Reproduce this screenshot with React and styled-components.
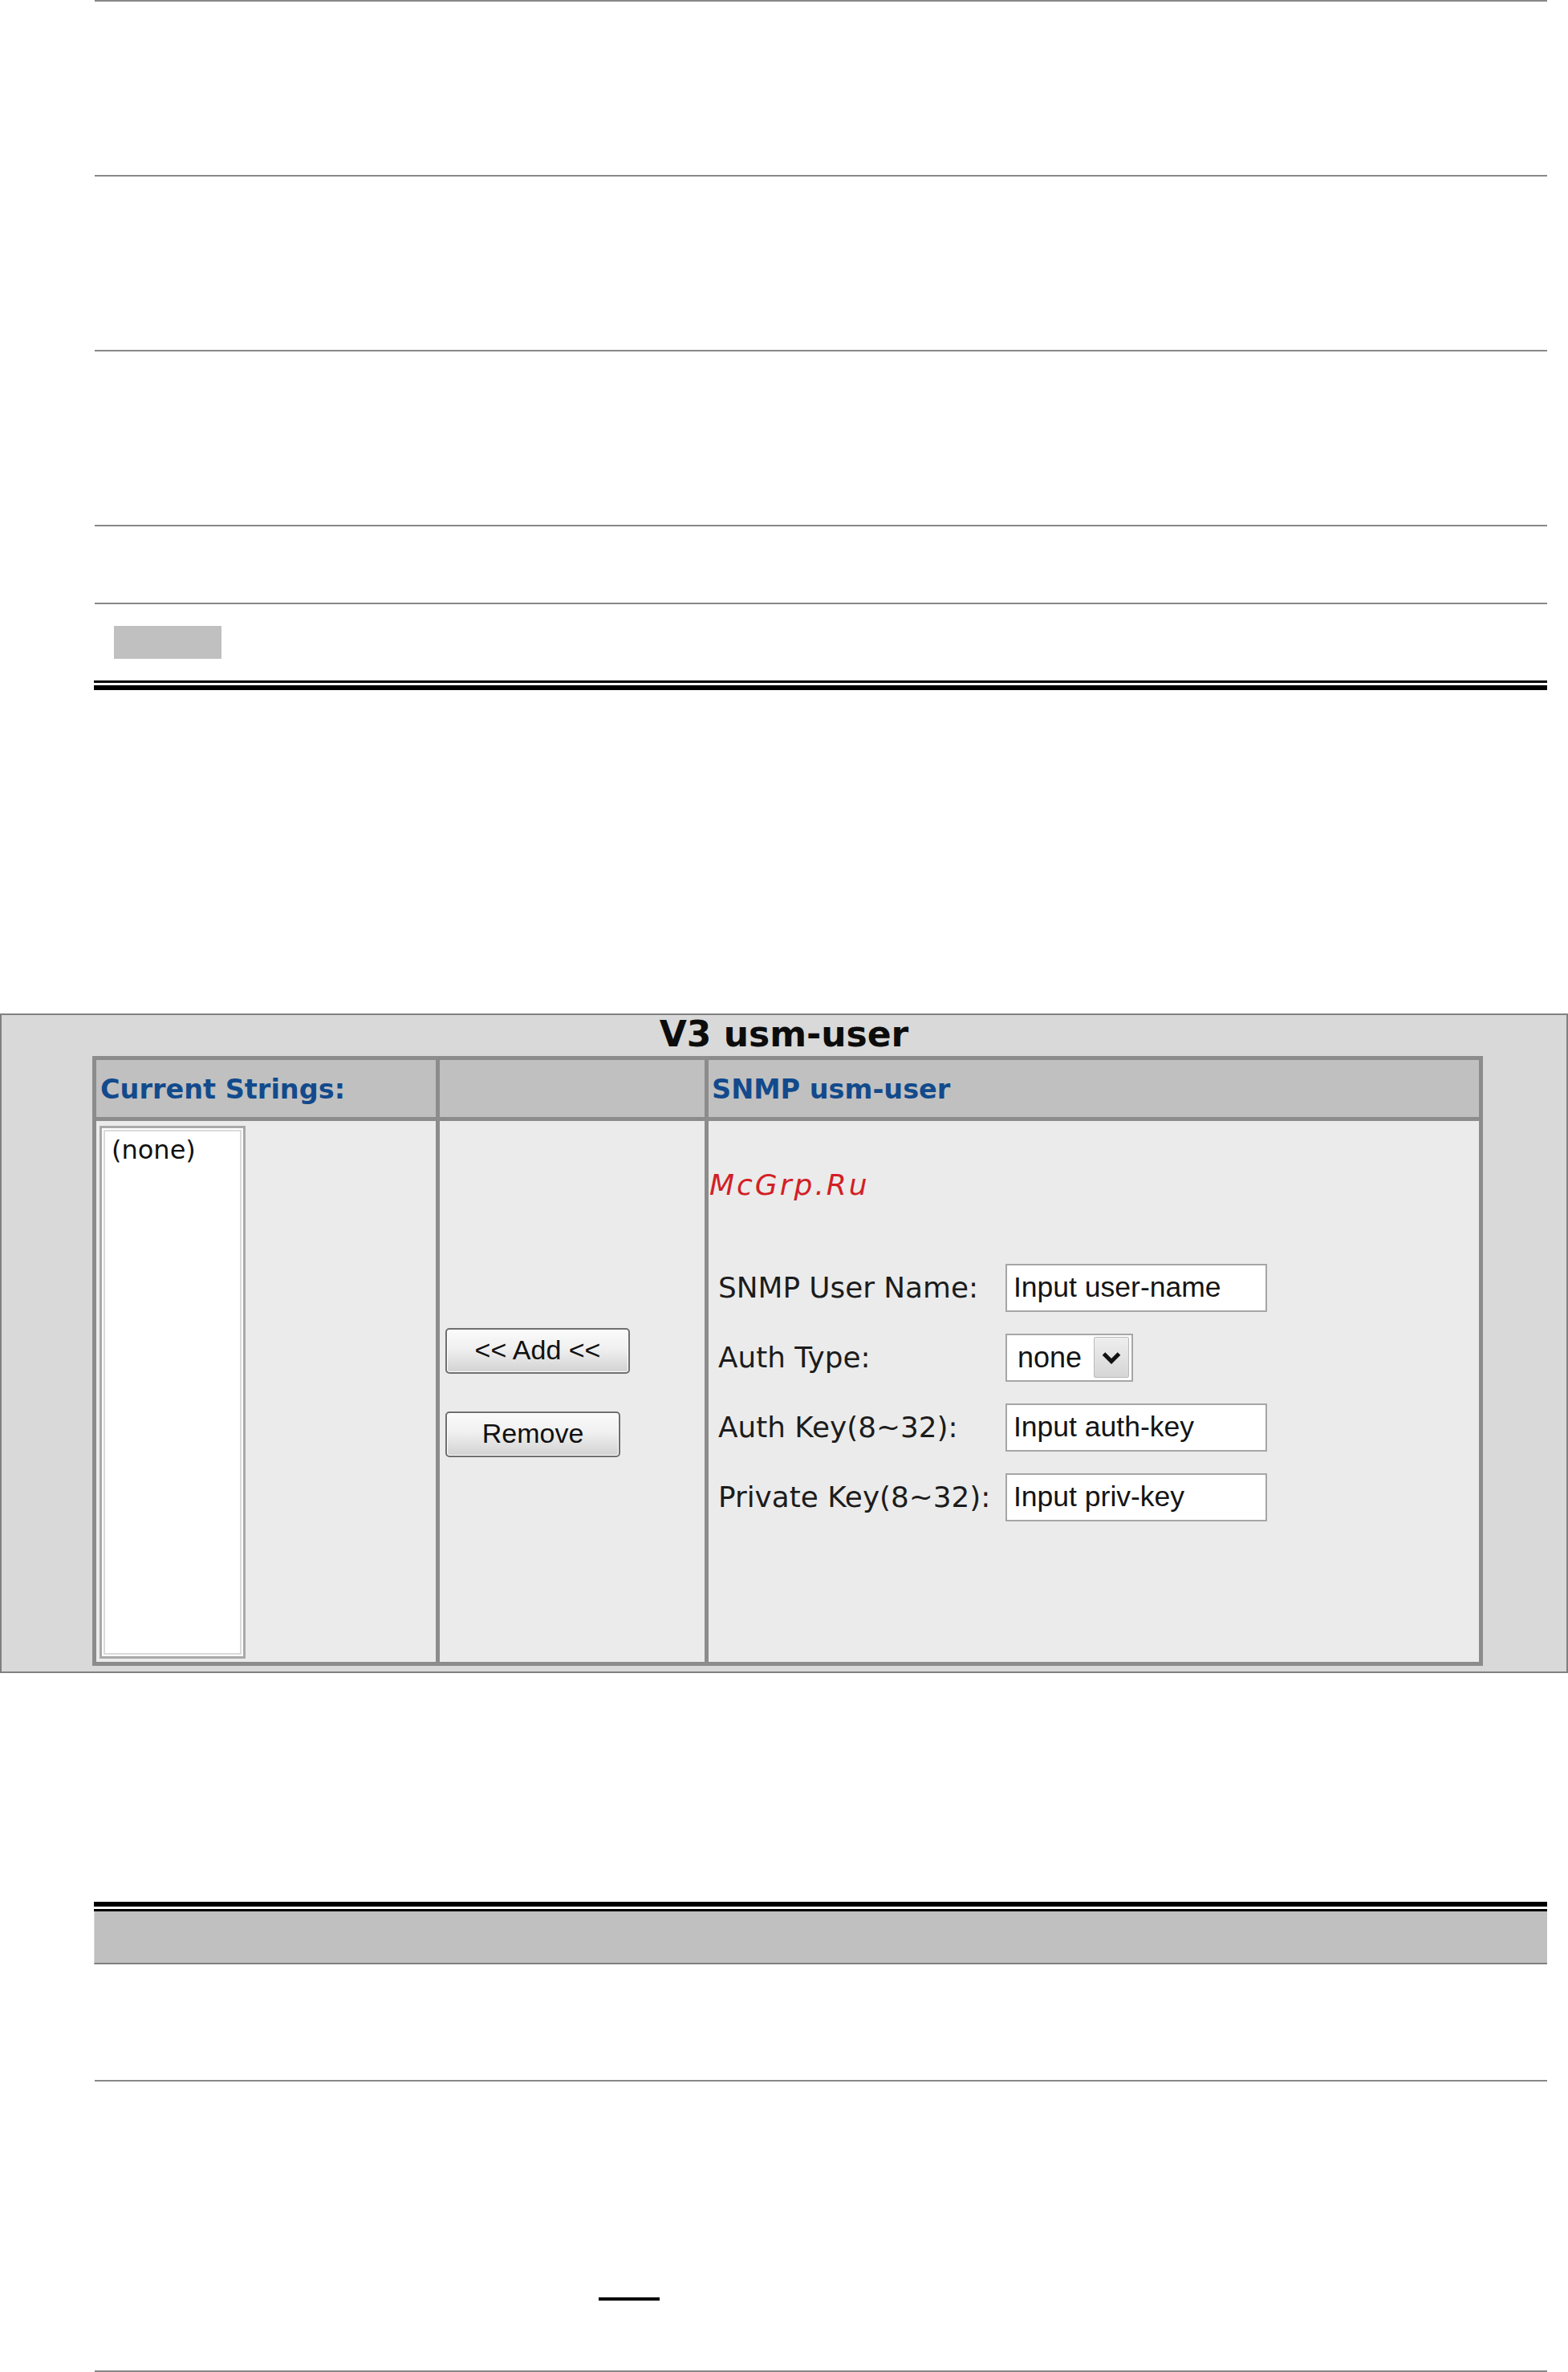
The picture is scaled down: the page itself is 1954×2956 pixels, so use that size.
import React from "react";
import styled, { createGlobalStyle } from "styled-components";

const Global = createGlobalStyle`
  html, body { margin: 0; padding: 0; background: #ffffff; }
  body { width: 1954px; min-height: 2956px; font-family: "DejaVu Sans", Verdana, sans-serif; }
  * { box-sizing: border-box; }
`;

const Page = styled.div`
  width: 1954px;
  height: 2956px;
  overflow: hidden;
  background: #ffffff;
`;

const DocSection = styled.section`
  margin-left: 118px;
  width: 1810px;
  margin-top: ${(p) => p.$top || 0}px;
`;

const DocRow = styled.div`
  height: ${(p) => p.$h}px;
  border-top: ${(p) => (p.$noTop ? "none" : "2px solid #888888")};
  border-bottom: ${(p) => (p.$bottom ? "2px solid #888888" : "none")};
  box-sizing: content-box;
`;

const Swatch = styled.div`
  margin: 27px 0 0 24px;
  width: 134px;
  height: 41px;
  background: #c0c0c0;
`;

const DoubleRule = styled.div`
  height: 12px;
  border-top: ${(p) => (p.$thickTop ? 6 : 3)}px solid #000;
  border-bottom: ${(p) => (p.$thickTop ? 3 : 6)}px solid #000;
  margin-left: -1px;
`;

const HeaderBand = styled.div`
  height: 66px;
  background: #c0c0c0;
  border-bottom: 2px solid #808080;
  border-left: 1px solid #d8d8d8;
  margin-left: -1px;
`;

const BlankUnderline = styled.span`
  display: block;
  margin: 269px 0 0 628px;
  width: 76px;
  height: 4px;
  background: #000;
`;

const Panel = styled.div`
  margin-top: ${(p) => p.$top}px;
  width: 1954px;
  height: 822px;
  background: #d9d9d9;
  border: 2px solid #808080;
  padding-top: 2px;
`;

const PanelTitle = styled.h2`
  margin: 0;
  height: 44px;
  font-family: "DejaVu Sans", Verdana, sans-serif;
  font-weight: bold;
  font-size: 44px;
  line-height: 44px;
  color: #0c0c0c;
  text-align: center;
`;

const Grid = styled.div`
  margin: 5px 0 0 113px;
  width: 1733px;
  display: grid;
  grid-template-columns: 423px 330px 960px;
  grid-template-rows: 71px 674px;
  gap: 5px;
  padding: 5px;
  background: #8c8c8c;
`;

const HeadCell = styled.div`
  background: #c0c0c0;
  display: flex;
  align-items: center;
  padding-left: ${(p) => p.$pad || 5}px;
  padding-top: 2px;
  font-family: "DejaVu Sans", Verdana, sans-serif;
  font-weight: bold;
  font-size: 33.5px;
  color: #124a8c;
  white-space: nowrap;
`;

const ListCell = styled.div`
  background: #ebebeb;
  padding: 6px 0 0 4px;
`;

const ListBox = styled.div`
  width: 182px;
  height: 664px;
  background: #ffffff;
  border: 3px solid #a9a9a9;
  box-shadow: inset 0 0 0 2px #ffffff, inset 0 0 0 4px #dadada;
  padding: 8px 0 0 12px;
`;

const ListItem = styled.div`
  font-family: "DejaVu Sans", Verdana, sans-serif;
  font-size: 32px;
  line-height: 1.2;
  color: #111;
`;

const ActionCell = styled.div`
  background: #ebebeb;
  display: flex;
  flex-direction: column;
  align-items: flex-start;
  justify-content: center;
  gap: 47px;
  padding: 2px 0 0 7px;
`;

const PushButton = styled.button`
  width: ${(p) => p.$w}px;
  height: 57px;
  margin: 0;
  padding: 0 0 2px 0;
  border: 2px solid #6f6f6f;
  border-radius: 5px;
  background: linear-gradient(#fbfbfb 0%, #f0f0f0 45%, #d2d2d2 100%);
  box-shadow: inset 0 0 0 1px #ffffff;
  font-family: "Liberation Sans", Arial, sans-serif;
  font-size: 34px;
  color: #111;
  text-align: center;
  cursor: pointer;
`;

const FormCell = styled.div`
  position: relative;
  background: #ebebeb;
  display: flex;
  flex-direction: column;
  justify-content: center;
  padding: 2px 0 0 12px;
`;

const Watermark = styled.span`
  position: absolute;
  left: 1px;
  top: 62px;
  font-family: "DejaVu Sans", Verdana, sans-serif;
  font-style: italic;
  font-size: 36px;
  line-height: 1;
  letter-spacing: 3px;
  color: #d21f26;
`;

const FormGrid = styled.div`
  display: grid;
  grid-template-columns: 358px 330px;
  row-gap: 27px;
  align-items: center;
`;

const FieldLabel = styled.label`
  font-family: "DejaVu Sans", Verdana, sans-serif;
  font-size: 35.8px;
  line-height: 1;
  color: #1c1c1c;
  white-space: nowrap;
`;

const TextBox = styled.input`
  width: 326px;
  height: 60px;
  margin: 0;
  border: 2px solid #a6a6a6;
  background: #ffffff;
  padding: 0 0 0 8px;
  font-family: "Liberation Sans", Arial, sans-serif;
  font-size: 35.5px;
  color: #141414;
  outline: none;
`;

const SelectBox = styled.div`
  width: 159px;
  height: 60px;
  border: 2px solid #a6a6a6;
  background: #ffffff;
  display: flex;
  align-items: center;
  justify-content: space-between;
  padding: 0 3px 0 13px;
`;

const SelectText = styled.span`
  font-family: "Liberation Sans", Arial, sans-serif;
  font-size: 36px;
  color: #141414;
`;

const SelectArrow = styled.span`
  width: 44px;
  height: 51px;
  display: flex;
  align-items: center;
  justify-content: center;
  border: 1px solid #b9b9b9;
  border-radius: 2px;
  background: linear-gradient(#eeeeee, #d6d6d6);
`;

function Chevron() {
  return (
    <svg width="26" height="18" viewBox="0 0 26 18">
      <path d="M3.5 4 L13 13.5 L22.5 4" fill="none" stroke="#111" strokeWidth="5" strokeLinecap="butt" strokeLinejoin="miter" />
    </svg>
  );
}

const fields = [
  { label: "SNMP User Name:", value: "Input user-name" },
  { label: "Auth Type:", select: "none" },
  { label: "Auth Key(8~32):", value: "Input auth-key" },
  { label: "Private Key(8~32):", value: "Input priv-key" },
];

export default function App() {
  return (
    <Page>
      <Global />
      <DocSection>
        <DocRow $h={216} />
        <DocRow $h={216} />
        <DocRow $h={216} />
        <DocRow $h={95} />
        <DocRow $h={95}>
          <Swatch />
        </DocRow>
        <DoubleRule />
      </DocSection>

      <Panel $top={403}>
        <PanelTitle>V3 usm-user</PanelTitle>
        <Grid>
          <HeadCell $pad={5}>Current Strings:</HeadCell>
          <HeadCell />
          <HeadCell $pad={4}>SNMP usm-user</HeadCell>

          <ListCell>
            <ListBox>
              <ListItem>(none)</ListItem>
            </ListBox>
          </ListCell>

          <ActionCell>
            <PushButton $w={230}>&lt;&lt; Add &lt;&lt;</PushButton>
            <PushButton $w={218}>Remove</PushButton>
          </ActionCell>

          <FormCell>
            <Watermark>McGrp.Ru</Watermark>
            <FormGrid>
              {fields.map((f) => (
                <React.Fragment key={f.label}>
                  <FieldLabel>{f.label}</FieldLabel>
                  {f.select ? (
                    <SelectBox>
                      <SelectText>{f.select}</SelectText>
                      <SelectArrow>
                        <Chevron />
                      </SelectArrow>
                    </SelectBox>
                  ) : (
                    <TextBox readOnly defaultValue={f.value} />
                  )}
                </React.Fragment>
              ))}
            </FormGrid>
          </FormCell>
        </Grid>
      </Panel>

      <DocSection $top={285}>
        <DoubleRule $thickTop />
        <HeaderBand />
        <DocRow $h={144} $noTop />
        <DocRow $h={360} $bottom>
          <BlankUnderline />
        </DocRow>
      </DocSection>
    </Page>
  );
}
